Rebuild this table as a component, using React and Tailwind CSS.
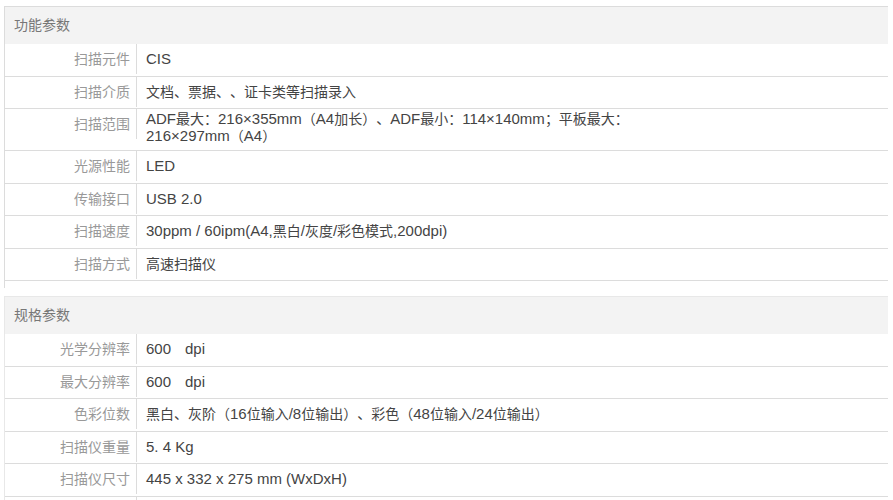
const sections = [
  {
    title: '功能参数',
    rows: [
      { label: '扫描元件', value: 'CIS' },
      { label: '扫描介质', value: '文档、票据、、证卡类等扫描录入' },
      {
        label: '扫描范围',
        value: ['ADF最大：216×355mm（A4加长）、ADF最小：114×140mm；平板最大：', '216×297mm（A4）'],
      },
      { label: '光源性能', value: 'LED' },
      { label: '传输接口', value: 'USB 2.0' },
      { label: '扫描速度', value: '30ppm / 60ipm(A4,黑白/灰度/彩色模式,200dpi)' },
      { label: '扫描方式', value: '高速扫描仪' },
    ],
  },
  {
    title: '规格参数',
    rows: [
      { label: '光学分辨率', value: '600\u3000dpi' },
      { label: '最大分辨率', value: '600\u3000dpi' },
      { label: '色彩位数', value: '黑白、灰阶（16位输入/8位输出）、彩色（48位输入/24位输出）' },
      { label: '扫描仪重量', value: '5. 4 Kg' },
      { label: '扫描仪尺寸', value: '445 x 332 x 275 mm (WxDxH)' },
      { label: '', value: '' },
    ],
  },
];

// latin runs are a touch larger than the CJK ones in the original
function Mixed({ text }) {
  const parts = text.split(/([\u3000-\u9fff\uff00-\uffef]+)/).filter(Boolean);
  return parts.map((p, i) =>
    /[\u3000-\u9fff\uff00-\uffef]/.test(p) ? (
      <span key={i} className="text-[14px]">
        {p}
      </span>
    ) : (
      <span key={i} className="text-[15px]">
        {p}
      </span>
    )
  );
}

function ParamRow({ label, value }) {
  const multi = Array.isArray(value);
  return (
    <div className="flex items-start h-[32.5px] has-[.multi]:h-[42px] border-b border-[#dcdcdc]">
      <div className="w-[132px] shrink-0 h-[30px] leading-[30px] text-right pr-[6px] border-r border-[#dcdcdc] text-[#999]">
        {label}
      </div>
      {multi ? (
        <div className="multi pl-[9px] pt-[1px] text-[#444]">
          {value.map((line, i) => (
            <div key={i} className="h-[17px] leading-[17px] whitespace-nowrap">
              <Mixed text={line} />
            </div>
          ))}
        </div>
      ) : (
        <div className="pl-[9px] h-[30px] leading-[30px] text-[#444] whitespace-pre">
          <Mixed text={value} />
        </div>
      )}
    </div>
  );
}

export default function App() {
  return (
    <div
      className="bg-white w-[893px] h-[500px] overflow-hidden pt-[6px] pl-[4px] pr-[5px] text-[14px] [text-spacing-trim:space-all]"
      style={{ fontFamily: '"Liberation Sans", Arial, "Noto Sans CJK SC", sans-serif' }}
    >
      {sections.map((s, i) => (
        <div
          key={s.title}
          className={
            i === 0
              ? 'border-l border-t border-[#dcdcdc] pb-[7px] mb-[8px]'
              : 'border-l border-t border-[#e8e8e8]'
          }
        >
          <div className="h-[37px] leading-[37px] bg-[#f3f3f3] pl-[9px] text-[#777]">{s.title}</div>
          {s.rows.map((r, j) => (
            <ParamRow key={j} label={r.label} value={r.value} />
          ))}
        </div>
      ))}
    </div>
  );
}
